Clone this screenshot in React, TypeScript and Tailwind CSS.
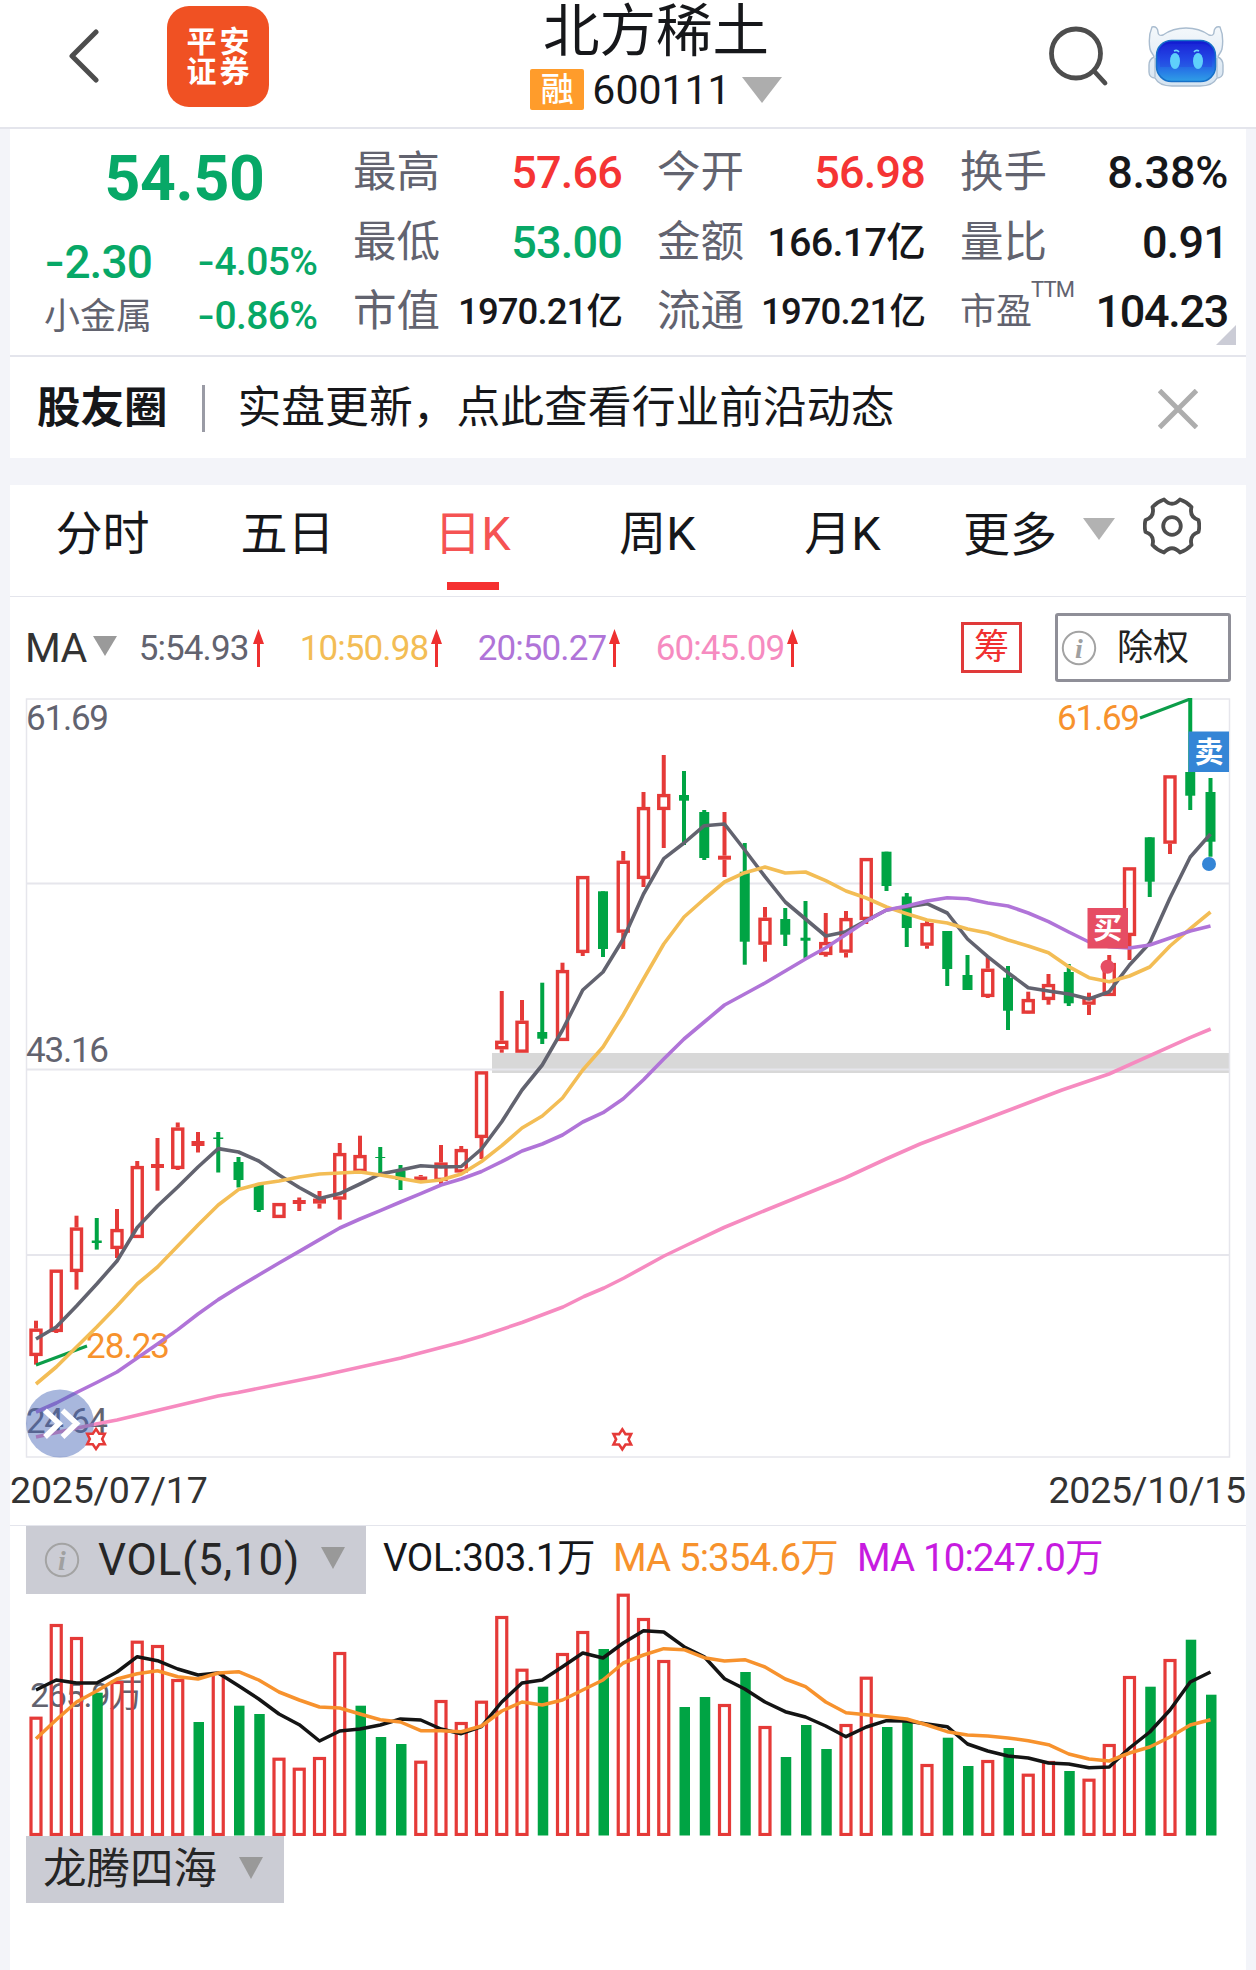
import { useState } from "react";

type Dir = "R" | "G";
// direction, high, body top, body bottom, low
type Candle = [Dir, number, number, number, number];

const CANDLES: Candle[] = [
  ["R", 1320.7, 1328.6, 1356, 1364.6], ["R", 1269.6, 1269.6, 1332, 1333], ["R", 1215.7, 1227.5, 1272, 1289.6],
  ["G", 1218, 1240.5, 1243, 1249.6], ["R", 1209, 1229, 1249, 1258], ["R", 1161, 1166, 1238, 1238],
  ["R", 1138, 1164, 1168, 1190.7], ["R", 1122.5, 1127.5, 1169, 1170], ["R", 1132, 1141, 1146, 1152.5],
  ["G", 1132, 1137.5, 1139, 1172.5], ["G", 1157, 1162, 1180, 1187.5], ["G", 1184, 1184, 1210, 1212],
  ["R", 1203, 1203, 1218, 1218], ["R", 1197.5, 1200, 1204, 1211], ["R", 1191, 1198.6, 1203.6, 1208.6],
  ["R", 1143, 1153, 1199.6, 1219.6], ["R", 1135.7, 1155, 1172, 1172], ["G", 1147, 1157, 1158, 1173.5],
  ["G", 1165, 1171, 1180, 1190], ["R", 1175, 1176.5, 1180.5, 1183], ["R", 1145, 1162.5, 1181, 1184.6],
  ["R", 1146, 1149, 1172.5, 1172.5], ["R", 1071.3, 1071.3, 1138, 1159], ["R", 991, 1040.7, 1049.3, 1052.7],
  ["R", 1000, 1020.7, 1052.7, 1052.7], ["G", 982.7, 1032, 1038.7, 1044], ["R", 962.7, 970, 1041, 1041],
  ["R", 876, 876, 953, 956], ["G", 891.3, 891.3, 949, 957], ["R", 851, 860.7, 932.7, 949],
  ["R", 792, 807, 879, 887], ["R", 755, 794, 810, 848], ["G", 771, 795, 800.7, 845],
  ["G", 810, 812, 858, 860], ["R", 812, 855.7, 859.7, 877], ["G", 843, 871.7, 941.7, 964.7],
  ["R", 907, 917.7, 944.7, 961.7], ["G", 908, 919, 934.7, 946], ["G", 901, 937.7, 940.7, 958],
  ["R", 913, 942, 955, 956.7], ["R", 911, 918, 952.7, 957.5], ["R", 858, 858, 920, 924],
  ["G", 851.7, 851.7, 886, 891], ["G", 893, 896.5, 928, 947], ["R", 920.7, 923, 945.7, 948.7],
  ["G", 931, 931, 969, 986], ["G", 955, 975, 990, 990], ["R", 957, 968.7, 997, 998],
  ["G", 966, 977.7, 1010.7, 1030], ["R", 991.7, 999, 1013.7, 1014], ["R", 974, 984, 1000, 1004.7],
  ["G", 964, 972, 1003.3, 1006], ["R", 992.7, 997, 1004.7, 1015], ["R", 955, 963, 996, 996],
  ["R", 867.3, 867.3, 936, 960], ["G", 837.3, 837.3, 881.7, 897], ["R", 775.3, 775.3, 843.7, 854],
  ["G", 698, 772, 795.7, 810], ["G", 778, 792, 841.7, 856.7],
];

const VOLUMES = [
  1716.7, 1624, 1637, 1692.7, 1681, 1640.7, 1645, 1679, 1722, 1672, 1705.7, 1714, 1757.7, 1767.7, 1757,
  1652, 1705.7, 1737, 1744, 1760.7, 1700, 1722, 1700.7, 1616, 1668.7, 1686.7, 1653, 1631, 1649, 1593.7,
  1618, 1660, 1707, 1697, 1704, 1672, 1726, 1757, 1725, 1749, 1724, 1676.7, 1727, 1721.7, 1764,
  1737.7, 1766, 1760, 1748, 1773.7, 1761, 1771, 1778.7, 1744, 1676, 1686.7, 1659, 1639.7, 1694.7,
];
// indexes of the falling days
const VOL_GREEN = [3, 8, 10, 11, 16, 17, 18, 25, 28, 32, 33, 35, 37, 38, 39, 42, 43, 45, 46, 48, 51, 55, 57, 58];

const MA5 = [
  1339, 1327, 1306, 1284, 1261, 1227.5, 1206, 1187, 1167, 1148.6, 1152, 1161, 1175, 1187.5, 1198.6, 1193.6,
  1184, 1174, 1170, 1165.7, 1167, 1166.5, 1149, 1121.7, 1090, 1065, 1030, 990, 972, 939, 894, 858.7, 843,
  825.7, 824, 850, 876.7, 902, 919, 936, 931.7, 920.7, 910, 907, 903.7, 913, 939, 956.7, 972.7, 987.7,
  991, 994, 999, 991.7, 965, 943, 898, 857, 834,
];
const MA10 = [
  1384, 1367, 1347, 1327, 1306, 1284, 1267, 1246, 1225, 1205, 1189.6, 1184, 1181, 1177, 1174, 1173, 1172,
  1175, 1178.6, 1182, 1180, 1174, 1161.5, 1145.7, 1128, 1116, 1098, 1070, 1047, 1014.7, 979, 944, 917,
  899, 882, 872.7, 867, 873, 872, 880.7, 891, 898, 907, 913.7, 920, 923, 929, 933, 940, 946, 952.7,
  966.7, 977.7, 981.7, 976, 967, 946, 928.7, 912,
];
const MA20 = [
  1412, 1403, 1392.5, 1382.5, 1372, 1358, 1344, 1329.6, 1314, 1299.6, 1287, 1275, 1263, 1251.4, 1239.6,
  1228, 1219, 1210.7, 1202, 1193.6, 1185, 1179, 1171.5, 1161.7, 1151, 1144, 1135, 1122, 1112.7, 1098.7,
  1079.7, 1059, 1039, 1022, 1005, 994, 983, 971, 959, 947.7, 934.5, 921, 910, 906, 901, 897.7, 898.7,
  903, 906, 913, 921.7, 932, 942, 946.7, 948, 945, 938, 931, 926,
];
const MA60 =
  "36,1437 96,1424 117,1420 218,1396 238,1392.5 320,1376 401,1358 462,1342 482,1336 522,1322.5 563,1307 584,1296.5 604,1288 624,1278 664,1256 687,1245 724,1227.5 765,1210.5 845,1178 886,1159 920,1144 1062,1090 1109,1074 1190,1037.7 1210.7,1029";

const VMA5 = [
  1690, 1680, 1683, 1683, 1672, 1656.7, 1660.7, 1669, 1675, 1673, 1685.7, 1699, 1714, 1724.7, 1741, 1731,
  1729, 1725, 1719, 1720, 1729, 1733.7, 1726.7, 1702, 1683, 1680, 1666.7, 1653, 1658, 1643, 1630.7, 1632,
  1646.7, 1656.7, 1678.7, 1689, 1702, 1711.7, 1717, 1726, 1736.7, 1727, 1720.7, 1721, 1724, 1726.7, 1744,
  1751, 1756, 1758, 1763, 1764, 1767.7, 1767, 1748, 1732, 1710, 1682, 1672,
];
const VMA10 = [
  1738.7, 1719.7, 1702, 1691, 1679, 1673.7, 1670.7, 1676.7, 1679, 1673, 1671.7, 1680, 1692, 1700, 1707,
  1708, 1714, 1719.7, 1722, 1730.7, 1730.7, 1731.7, 1726, 1711, 1702, 1705, 1700, 1690, 1680, 1663, 1655,
  1648.7, 1649.7, 1657.7, 1661, 1659.7, 1667, 1679, 1686.7, 1702, 1712.7, 1714.7, 1716.7, 1719, 1725,
  1731.7, 1735, 1736, 1738, 1740.7, 1744.7, 1754, 1759, 1761, 1753, 1747, 1737, 1725, 1719.7,
];

const RED = "#e53a38";
const GREEN = "#00a444";
const BAR_BOTTOM = 1835.5;

const cx = (i: number) => 36 + i * 20.25;
const toPoints = (ys: number[]) => ys.map((y, i) => `${cx(i)},${y}`).join(" ");

function Triangle({ className }: { className: string }) {
  return (
    <svg viewBox="0 0 20 14" preserveAspectRatio="none" className={className}>
      <path d="M0 0H20L10 14Z" fill="currentColor" />
    </svg>
  );
}

function InfoIcon() {
  return (
    <svg viewBox="0 0 36 36" className="w-9 h-9 shrink-0" fill="none">
      <circle cx="18" cy="18" r="16.2" stroke="#a3a3a3" strokeWidth="2" />
      <text x="18" y="27.500" textAnchor="middle" fontSize="28" fontStyle="italic" fontWeight="700" fill="#a0a0a0" fontFamily="Liberation Serif, serif">
        i
      </text>
    </svg>
  );
}

function Robot() {
  return (
    <svg viewBox="0 0 76 64" className="w-[76px] h-[64px]">
      <defs>
        <linearGradient id="shell" x1="0" y1="0" x2="0" y2="1">
          <stop offset="0" stopColor="#f4f8fb" />
          <stop offset="1" stopColor="#d6e4f1" />
        </linearGradient>
        <linearGradient id="visor" x1="0" y1="0" x2="0" y2="1">
          <stop offset="0" stopColor="#1216cf" />
          <stop offset="0.45" stopColor="#1f4fe6" />
          <stop offset="1" stopColor="#2f9fe6" />
        </linearGradient>
      </defs>
      <path
        d="M4 2C1 9 1 18 2 24C3 28 6 30 6 32C2 34 1 36 1 40V47C1 51 4 53 7 53C10 59 16 61 24 61H52C60 61 66 59 69 53C72 53 75 51 75 47V40C75 36 74 34 70 32C70 30 73 28 74 24C75 18 75 9 72 2C68 1 66 4 66 7C66 10 64 11 61 10C54 5 46 3 38 3C30 3 22 5 15 10C12 11 10 10 10 7C10 4 8 1 4 2Z"
        fill="url(#shell)"
        stroke="#a9bccf"
        strokeWidth="1.400"
      />
      <path d="M7 33V52M69 33V52" stroke="#a9bccf" strokeWidth="1.200" />
      <rect x="8.500" y="15.500" width="59" height="41" rx="15" fill="url(#visor)" stroke="#1670c8" strokeWidth="1.5" />
      <path d="M12 42V29C12 22 16 19 23 19H53C60 19 64 22 64 29V42Z" fill="#2a35e0" opacity="0.3" />
      <ellipse cx="27" cy="36" rx="5" ry="8" fill="#5fd0fb" />
      <ellipse cx="50" cy="36" rx="5" ry="8" fill="#5fd0fb" />
      <path d="M26 26Q29 24.500 31 27M46 27Q48 24.500 51 26" stroke="#6fd6fb" strokeWidth="1.6" fill="none" />
    </svg>
  );
}

function Gear() {
  return (
    <svg viewBox="0 0 58 58" className="w-[58px] h-[58px]" fill="none" stroke="#4d4d4d" strokeWidth="3.8" strokeLinejoin="round">
      <path d="M21 2.500Q29 11 37 2.500Q44 5 48.500 10Q46 20 55.500 23Q57 29 55.500 35Q46 38 48.500 48Q44 53 37 55.500Q29 47 21 55.500Q14 53 9.500 48Q12 38 2.500 35Q1 29 2.500 23Q12 20 9.500 10Q14 5 21 2.500Z" />
      <circle cx="29" cy="29" r="8.800" />
    </svg>
  );
}

function Quote({ label, children, color = "text-[#16171a]", size = "text-[45px] tracking-[-0.8px]" }: any) {
  return (
    <div className="flex items-center justify-between h-[69.5px]">
      <span className="text-[43.5px] text-[#62636f]">{label}</span>
      <span className={`font-medium ${size} ${color}`}>{children}</span>
    </div>
  );
}

const MA_VALUES = [
  { text: "5:54.93", color: "text-[#62636f]", width: "w-[114px]" },
  { text: "10:50.98", color: "text-[#f3bd55]", width: "w-[131px]" },
  { text: "20:50.27", color: "text-[#b074d8]", width: "w-[131px]" },
  { text: "60:45.09", color: "text-[#f68bc0]", width: "w-[131px]" },
];

const TABS = ["分时", "五日", "日K", "周K", "月K"];

function Star({ x, y }: { x: number; y: number }) {
  return (
    <path
      transform={`translate(${x} ${y})`}
      d="M0 -10L3.200 -5.200H8.800L6.200 0L8.800 5.200H3.200L0 10L-3.200 5.200H-8.800L-6.200 0L-8.800 -5.200H-3.200Z"
      fill="#fff"
      stroke={RED}
      strokeWidth="2.600"
    />
  );
}

function PriceChart() {
  return (
    <svg viewBox="10 698 1236 760" className="block w-full h-[760px]" fontFamily="Roboto, sans-serif" fontSize="35" fill="none">
      <rect x="492" y="1053" width="737" height="20" fill="#d8d8d8" />
      <g stroke="#e6e6ec" strokeWidth="2">
        <rect x="26.500" y="699" width="1203" height="758" strokeWidth="1.500" />
        <path d="M27 883.500H1229M27 1069.500H1229M27 1255H1229" />
      </g>

      <g fill="#62636f">
        <text x="26" y="730" textLength="83">61.69</text>
        <text x="26" y="1062" textLength="83">43.16</text>
        <text x="26" y="1433" textLength="82">24.64</text>
      </g>
      <g fill="#f7922d">
        <text x="86" y="1357.500" textLength="84">28.23</text>
        <text x="1057" y="730" textLength="83">61.69</text>
      </g>

      {CANDLES.map(([dir, high, top, bottom, low], i) => {
        const x = cx(i);
        if (dir === "G") {
          return (
            <g key={i} fill={GREEN}>
              <rect x={x - 2} y={high} width="4" height={low - high} />
              <rect x={x - 5} y={top} width="10" height={bottom - top} />
            </g>
          );
        }
        return (
          <g key={i} fill={RED}>
            <rect x={x - 2} y={high} width="4" height={top - high} />
            <rect x={x - 2} y={bottom} width="4" height={low - bottom} />
            {bottom - top < 6 ? (
              <rect x={x - 6.5} y={top} width="13" height={bottom - top} />
            ) : (
              <rect x={x - 5} y={top + 1.6} width="10" height={bottom - top - 3.2} fill="none" stroke={RED} strokeWidth="3.400" />
            )}
          </g>
        );
      })}

      <path d="M36 1365L87 1346M1140 718L1190 699" stroke="#0c9d49" strokeWidth="3" />

      <g strokeWidth="3.600" strokeLinejoin="round">
        <polyline points={toPoints(MA5)} stroke="#62636f" />
        <polyline points={toPoints(MA10)} stroke="#f3bd55" />
        <polyline points={toPoints(MA20)} stroke="#b074d8" />
        <polyline points={MA60} stroke="#f68bc0" />
      </g>

      <Star x={622.3} y={1439.3} />
      <circle cx="60" cy="1423.500" r="34" fill="#4a69b8" opacity="0.48" />
      <path d="M45 1410.500L59 1423.500L45 1437M62.500 1410.500L76.500 1423.500L62.500 1437" stroke="#fff" strokeWidth="5.500" />
      <Star x={96} y={1439} />

      <rect x="1087.500" y="908" width="40.500" height="40.500" fill="#e64d64" />
      <rect x="1188.500" y="731.500" width="40.500" height="40.500" fill="#3485d6" />
      <g fill="#fff" fontSize="29" fontWeight="700" textAnchor="middle" fontFamily="Noto Sans CJK SC, sans-serif">
        <text x="1107.700" y="939">买</text>
        <text x="1209" y="762.500">卖</text>
      </g>
      <circle cx="1107.500" cy="966.700" r="7" fill="#e64d64" />
      <circle cx="1209" cy="864" r="7" fill="#3485d6" />
    </svg>
  );
}

function VolumeChart() {
  return (
    <svg viewBox="10 1593 1236 243" className="block w-full h-[243px]" fill="none">
      <text x="30" y="1707" fontSize="34" textLength="113" fill="#62636f" fontFamily="Roboto, Noto Sans CJK SC, sans-serif">
        265.9万
      </text>
      {VOLUMES.map((top, i) =>
        VOL_GREEN.includes(i) ? (
          <rect key={i} x={cx(i) - 4.5} y={top} width="10.500" height={BAR_BOTTOM - top} fill={GREEN} />
        ) : (
          <rect key={i} x={cx(i) - 5} y={top + 1.5} width="10" height={BAR_BOTTOM - top - 2.5} stroke={RED} strokeWidth="3.200" />
        )
      )}
      <g strokeWidth="3.500" strokeLinejoin="round">
        <polyline points={toPoints(VMA5)} stroke="#141414" />
        <polyline points={toPoints(VMA10)} stroke="#f7922d" />
      </g>
    </svg>
  );
}

export default function App() {
  const [tab, setTab] = useState("日K");
  const [notice, setNotice] = useState(true);

  return (
    <div className="w-[1256px] h-[1970px] overflow-hidden bg-[#f3f4f9] font-['Roboto','Noto_Sans_CJK_SC',sans-serif] leading-none text-[#16171a] whitespace-nowrap">
      {/* Header */}
      <header className="flex justify-between h-[129px] bg-white border-b-2 border-[#e4e5ec]">
        <div className="flex pl-[68px]">
          <svg viewBox="0 0 32 54" className="w-8 h-[54px] mt-[29px]" fill="none">
            <path d="M28 3L4 27L28 51" stroke="#4d4d4d" strokeWidth="5" strokeLinecap="round" strokeLinejoin="round" />
          </svg>
          <div className="w-[102px] h-[101px] mt-1.5 ml-[67px] rounded-[22px] bg-[#f05123] text-white font-bold text-[30px] leading-[30px] tracking-[3px] pl-[3px] flex flex-col items-center justify-center">
            <span className="h-[30px]">平安</span>
            <span className="h-[30px]">证券</span>
          </div>
        </div>
        <div className="flex flex-col items-center pr-1">
          <h1 className="text-[56.5px] h-[69px] leading-[65px]">北方稀土</h1>
          <div className="flex items-center h-[41px]">
            <span className="w-[54px] h-[41px] rounded-[2px] bg-[#ff9c2b] text-white font-medium text-[33px] flex items-center justify-center">融</span>
            <span className="text-[41px] ml-2 mr-[11px] pt-0.5">600111</span>
            <Triangle className="w-10 h-[26px] text-[#adadad]" />
          </div>
        </div>
        <div className="flex pr-8">
          <svg viewBox="0 0 62 62" className="w-[62px] h-[62px] mt-[25px] mr-[39px]" fill="none" stroke="#4d4d4d" strokeWidth="4.800" strokeLinecap="round">
            <circle cx="29" cy="28.500" r="24.500" />
            <path d="M47 46L58 58" />
          </svg>
          <div className="mt-[25px]"><Robot /></div>
        </div>
      </header>

      <main className="mx-[10px]">
        {/* Quote */}
        <section className="relative flex h-[228px] bg-white border-b-2 border-[#e4e5ec] pr-[18px]">
          <div className="w-[344px] pl-[34px] text-[#07a867]">
            <div className="h-[103px] pt-[17px] w-[281px] text-center font-bold text-[62.5px] leading-[66px] tracking-[-0.3px]">54.50</div>
            <div className="flex items-center h-[58px] font-medium">
              <span className="w-[153px] text-[46px] tracking-[-0.9px]"><span className="font-['Inter']">-</span>2.30</span>
              <span className="text-[39px] tracking-[-0.6px]"><span className="font-['Inter']">-</span>4.05%</span>
            </div>
            <div className="flex items-center h-[50px]">
              <span className="w-[153px] text-[36px] pt-1 text-[#62636f]">小金属</span>
              <span className="font-medium text-[39px] tracking-[-0.6px]"><span className="font-['Inter']">-</span>0.86%</span>
            </div>
          </div>
          <div className="flex gap-[35px] pt-[9px]">
            <div className="w-[269px]">
              <Quote label="最高" color="text-[#f53434]">57.66</Quote>
              <Quote label="最低" color="text-[#07a867]">53.00</Quote>
              <Quote label="市值" size="text-[36.5px] tracking-[-0.9px]">1970.21亿</Quote>
            </div>
            <div className="w-[268px]">
              <Quote label="今开" color="text-[#f53434]">56.98</Quote>
              <Quote label="金额" size="text-[39.5px] tracking-[-0.7px]">166.17亿</Quote>
              <Quote label="流通" size="text-[36.5px] tracking-[-0.9px]">1970.21亿</Quote>
            </div>
            <div className="w-[268px]">
              <Quote label="换手" size="text-[45px] tracking-[-0.3px]">8.38%</Quote>
              <Quote label="量比">0.91</Quote>
              <Quote
                label={
                  <span className="flex items-start text-[36px]">
                    市盈<span className="text-[22px] tracking-[-0.8px] -mt-[15px] -ml-px">TTM</span>
                  </span>
                }
                size="text-[45px] tracking-[-1.3px]"
              >
                104.23
              </Quote>
            </div>
          </div>
          <svg viewBox="0 0 20 20" className="absolute right-[10px] bottom-[10px] w-5 h-5">
            <path d="M20 0V20H0Z" fill="#cbccd6" />
          </svg>
        </section>

        {/* Notice */}
        {notice && (
          <section className="flex items-center h-[101px] bg-white pl-[27px] pr-[48px] pt-0.5">
            <span className="text-[43.5px] font-bold">股友圈</span>
            <span className="w-[3px] h-[47px] bg-[#9a9ba5] ml-[34px] mr-[33px]" />
            <span className="text-[43.8px] flex-1">实盘更新，点此查看行业前沿动态</span>
            <button onClick={() => setNotice(false)}>
              <svg viewBox="0 0 40 40" className="w-10 h-10" stroke="#adadad" strokeWidth="5">
                <path d="M1.500 1.500L38.500 38.500M38.500 1.500L1.500 38.500" />
              </svg>
            </button>
          </section>
        )}

        {/* Period tabs */}
        <nav className="flex mt-[27px] h-[112px] bg-white border-b border-[#e4e5ec] text-[47px]">
          {TABS.map((t) => (
            <button
              key={t}
              onClick={() => setTab(t)}
              className={`w-[185px] flex flex-col items-center ${t === tab ? "text-[#f55353]" : ""}`}
            >
              <span className="h-24 leading-[98px]">{t}</span>
              {t === tab && <span className="w-[52px] h-2 mt-px bg-[#f53030]" />}
            </button>
          ))}
          <button className="flex items-center h-24 ml-7 pt-0.5">
            更多
            <Triangle className="w-8 h-[22px] ml-[26px] -mt-2.5 text-[#b2b2b2]" />
          </button>
          <button className="ml-[28px] h-[81px] flex items-center">
            <Gear />
          </button>
        </nav>

        {/* Moving averages */}
        <div className="flex items-center h-[101px] bg-white px-[15px]">
          <span className="text-[41px] text-[#333] tracking-[-0.6px] pt-0.5">MA</span>
          <Triangle className="w-6 h-5 ml-[6px] mr-[22px] -mt-1 text-[#9a9a9a]" />
          {MA_VALUES.map((m) => (
            <div key={m.text} className={`flex items-center mr-9 ${m.color}`}>
              <span className={`text-[35px] pt-px tracking-[-0.9px] ${m.width}`}>{m.text}</span>
              <svg viewBox="0 0 11 40" className="w-[11px] h-10" fill="#ee3030">
                <path d="M5.500 1L11 16H7V39H4V16H0Z" />
              </svg>
            </div>
          ))}
          <button className="ml-auto mr-[33px] w-[61px] h-[51px] border-3 border-[#e03a3a] text-[#f03030] text-[35px] flex items-center justify-center">筹</button>
          <button className="w-[176px] h-[69px] border-3 border-[#8f8f98] rounded-[3px] flex items-center pl-[3px] text-[36px]">
            <InfoIcon />
            <span className="ml-[20px] text-[#222]">除权</span>
          </button>
        </div>

        <div className="bg-white">
          <PriceChart />
          <div className="flex justify-between items-center h-[68px] pb-0.5 border-b border-[#e4e5ec] text-[37.5px] text-[#333] tracking-[-0.2px]">
            <span>2025/07/17</span>
            <span>2025/10/15</span>
          </div>
        </div>

        {/* Volume */}
        <div className="bg-white h-[444px]">
          <div className="flex items-center h-[67px] pl-4">
            <button className="flex items-center w-[340px] h-[68px] bg-[#cbccd4] pl-[18px] text-[44px] text-[#262626]">
              <InfoIcon />
              <span className="ml-[18px] tracking-[0.8px]">VOL(5,10)</span>
              <Triangle className="w-6 h-[22px] ml-[21px] -mt-1 text-[#999]" />
            </button>
            <div className="flex text-[38.5px] ml-[17px] pb-0.5">
              <span className="tracking-[-0.4px] w-[230px]">VOL:303.1万</span>
              <span className="tracking-[-0.9px] w-[244px] text-[#f7922d]">MA 5:354.6万</span>
              <span className="tracking-[-0.9px] text-[#c71be0]">MA 10:247.0万</span>
            </div>
          </div>
          <VolumeChart />
          <button className="flex items-center ml-4 w-[258px] h-[67px] bg-[#cbccd4] pl-[17px] text-[43.5px] text-[#262626]">
            龙腾四海
            <Triangle className="w-6 h-[22px] ml-[22px] -mt-1 text-[#999]" />
          </button>
        </div>
      </main>
    </div>
  );
}
